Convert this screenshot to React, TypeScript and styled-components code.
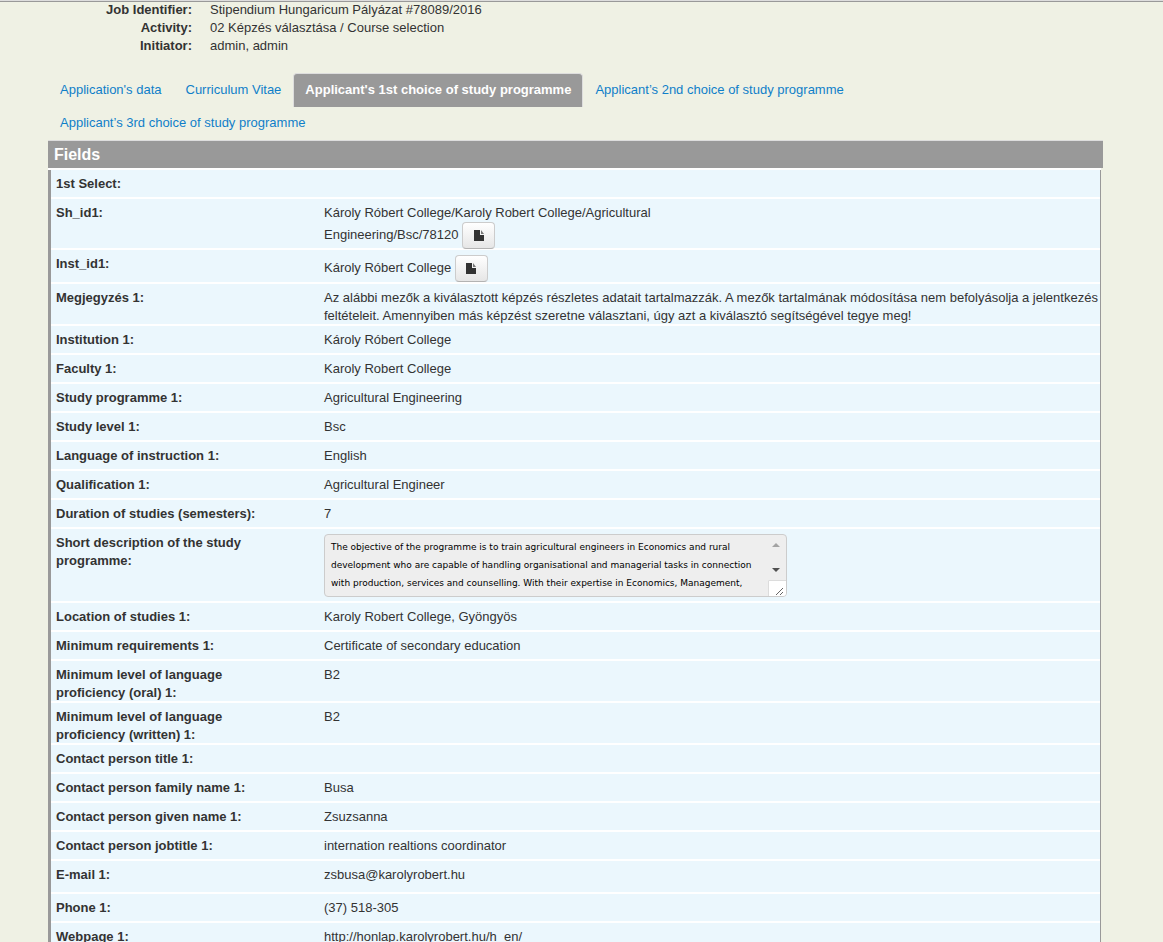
import React from 'react';
import styled, { createGlobalStyle } from 'styled-components';

const GlobalStyle = createGlobalStyle`
  *, *::before, *::after { box-sizing: border-box; }
  body {
    margin: 0;
    background: #eff1e4;
    color: #333;
    font: 13px/18px "Liberation Sans", Arial, sans-serif;
  }
`;

const Page = styled.main`
  border-top: 1px solid #ddd;
  padding: 0 60px 0 48px;
  box-shadow: inset 0 1px 0 #999;
`;

const Summary = styled.dl`
  display: grid;
  grid-template-columns: 144px 1fr;
  column-gap: 18px;
  margin: 0;
  dt { font-weight: bold; text-align: right; }
  dd { margin: 0; }
`;

const Tabs = styled.nav`
  display: flex;
  flex-wrap: wrap;
  margin-top: 18px;
  padding-bottom: 1px;
`;

const Tab = styled.a<{ $active?: boolean }>`
  height: 34px;
  margin-bottom: -1px;
  padding: 7px 11px;
  border: 1px solid ${p => (p.$active ? '#ddd' : 'transparent')};
  border-bottom: 0;
  border-radius: 4px 4px 0 0;
  background: ${p => (p.$active ? '#999' : 'transparent')};
  color: ${p => (p.$active ? '#fff' : '#0f7fc9')};
  font-weight: ${p => (p.$active ? 'bold' : 'normal')};
  text-decoration: none;
`;

const PanelTitle = styled.h2`
  margin: 0;
  padding: 5px 6px 4px;
  border-top: 1px solid #ddd;
  background: #999;
  color: #fff;
  font-size: 16px;
  line-height: 18px;
`;

const FieldTable = styled.table`
  width: calc(100% - 2px);
  border-collapse: separate;
  border-spacing: 0;
  border-top: 2px solid #fff;
  background: #ebf7fd;
`;

const Label = styled.th`
  width: 273px;
  padding: 5px 60px 1px 5px;
  border-left: 3px solid #999;
  box-shadow: inset 0 -2px 0 #fff;
  text-align: left;
  vertical-align: top;
`;

const Value = styled.td<{ $height: number }>`
  height: ${p => p.$height}px;
  padding: 5px 0 1px 3px;
  border-right: 1px solid #999;
  box-shadow: inset 0 -2px 0 #fff;
  vertical-align: top;
`;

const Picked = styled.div`
  max-width: 350px;
`;

const FileButton = styled.button`
  display: inline-flex;
  align-items: center;
  justify-content: center;
  width: 33px;
  height: 27px;
  padding: 0;
  border: 1px solid #ccc;
  border-bottom-color: #b3b3b3;
  border-radius: 4px;
  background: linear-gradient(#fff, #e6e6e6);
  vertical-align: middle;
`;

const ScrollBox = styled.div`
  position: relative;
  width: 463px;
  height: 63px;
`;

const Description = styled.textarea`
  display: block;
  width: 100%;
  height: 100%;
  padding: 3px 24px 4px 6px;
  border: 1px solid #ccc;
  border-radius: 4px;
  background: #eee;
  color: #000;
  font: 9px/18px "DejaVu Sans", Verdana, sans-serif;
  resize: none;
  overflow: hidden;
`;

const ScrollMarks = styled.svg`
  position: absolute;
  top: 1px;
  right: 1px;
  pointer-events: none;
`;

const FileIcon = () => (
  <svg width="10" height="12" viewBox="0 0 10 12" aria-hidden="true">
    <path d="M0 0h6v5h4v6H0z" fill="#333" />
    <path d="M7 0l3 4H7z" fill="#777" />
  </svg>
);

const description =
  'The objective of the programme is to train agricultural engineers in Economics and rural\n' +
  'development who are capable of handling organisational and managerial tasks in connection\n' +
  'with production, services and counselling. With their expertise in Economics, Management,';

type Field = { label: string; value?: string; kind?: 'pick' | 'area'; height?: number };

const fields: Field[] = [
  { label: '1st Select:' },
  { label: 'Sh_id1:', value: 'Károly Róbert College/Karoly Robert College/Agricultural Engineering/Bsc/78120', kind: 'pick', height: 51 },
  { label: 'Inst_id1:', value: 'Károly Róbert College', kind: 'pick', height: 34 },
  {
    label: 'Megjegyzés 1:',
    value:
      'Az alábbi mezők a kiválasztott képzés részletes adatait tartalmazzák. A mezők tartalmának módosítása nem befolyásolja a jelentkezés feltételeit. Amennyiben más képzést szeretne választani, úgy azt a kiválasztó segítségével tegye meg!',
  },
  { label: 'Institution 1:', value: 'Károly Róbert College' },
  { label: 'Faculty 1:', value: 'Karoly Robert College' },
  { label: 'Study programme 1:', value: 'Agricultural Engineering' },
  { label: 'Study level 1:', value: 'Bsc' },
  { label: 'Language of instruction 1:', value: 'English' },
  { label: 'Qualification 1:', value: 'Agricultural Engineer' },
  { label: 'Duration of studies (semesters):', value: '7' },
  { label: 'Short description of the study programme:', value: description, kind: 'area', height: 74 },
  { label: 'Location of studies 1:', value: 'Karoly Robert College, Gyöngyös' },
  { label: 'Minimum requirements 1:', value: 'Certificate of secondary education' },
  { label: 'Minimum level of language proficiency (oral) 1:', value: 'B2', height: 42 },
  { label: 'Minimum level of language proficiency (written) 1:', value: 'B2', height: 42 },
  { label: 'Contact person title 1:' },
  { label: 'Contact person family name 1:', value: 'Busa' },
  { label: 'Contact person given name 1:', value: 'Zsuzsanna' },
  { label: 'Contact person jobtitle 1:', value: 'internation realtions coordinator' },
  { label: 'E-mail 1:', value: 'zsbusa@karolyrobert.hu', height: 33 },
  { label: 'Phone 1:', value: '(37) 518-305' },
  { label: 'Webpage 1:', value: 'http://honlap.karolyrobert.hu/h_en/' },
];

const FieldValue = ({ field }: { field: Field }) => {
  if (field.kind === 'pick') {
    return (
      <Picked>
        {field.value}{' '}
        <FileButton type="button" aria-label={`Open ${field.label}`}>
          <FileIcon />
        </FileButton>
      </Picked>
    );
  }
  if (field.kind === 'area') {
    return (
      <ScrollBox>
        <Description id="description" readOnly defaultValue={field.value} />
        <ScrollMarks width="18" height="61" viewBox="0 0 18 61" aria-hidden="true">
          <path d="M4 12l4-4 4 4z" fill="#a3a3a3" />
          <path d="M4 33h8l-4 4z" fill="#505050" />
          <path d="M0 45h18v13a3 3 0 0 1-3 3H0z" fill="#fff" />
          <path d="M.5 61V45.500h17.500" fill="none" stroke="#dcdcdc" />
          <path d="M8 60l7-7M12 60l3-3" stroke="#666" />
        </ScrollMarks>
      </ScrollBox>
    );
  }
  return <>{field.value}</>;
};

export default function App() {
  return (
    <>
      <GlobalStyle />
      <Page>
        <Summary>
          <dt>Job Identifier:</dt>
          <dd>Stipendium Hungaricum Pályázat #78089/2016</dd>
          <dt>Activity:</dt>
          <dd>02 Képzés választása / Course selection</dd>
          <dt>Initiator:</dt>
          <dd>admin, admin</dd>
        </Summary>
        <Tabs>
          <Tab href="#data">Application's data</Tab>
          <Tab href="#cv">Curriculum Vitae</Tab>
          <Tab href="#first" $active aria-current="page">Applicant's 1st choice of study programme</Tab>
          <Tab href="#second">Applicant’s 2nd choice of study programme</Tab>
          <Tab href="#third">Applicant’s 3rd choice of study programme</Tab>
        </Tabs>
        <PanelTitle>Fields</PanelTitle>
        <FieldTable>
          <tbody>
            {fields.map(field => (
              <tr key={field.label}>
                <Label scope="row">
                  {field.kind === 'area' ? <label htmlFor="description">{field.label}</label> : field.label}
                </Label>
                <Value $height={field.height ?? 29}>
                  <FieldValue field={field} />
                </Value>
              </tr>
            ))}
          </tbody>
        </FieldTable>
      </Page>
    </>
  );
}
